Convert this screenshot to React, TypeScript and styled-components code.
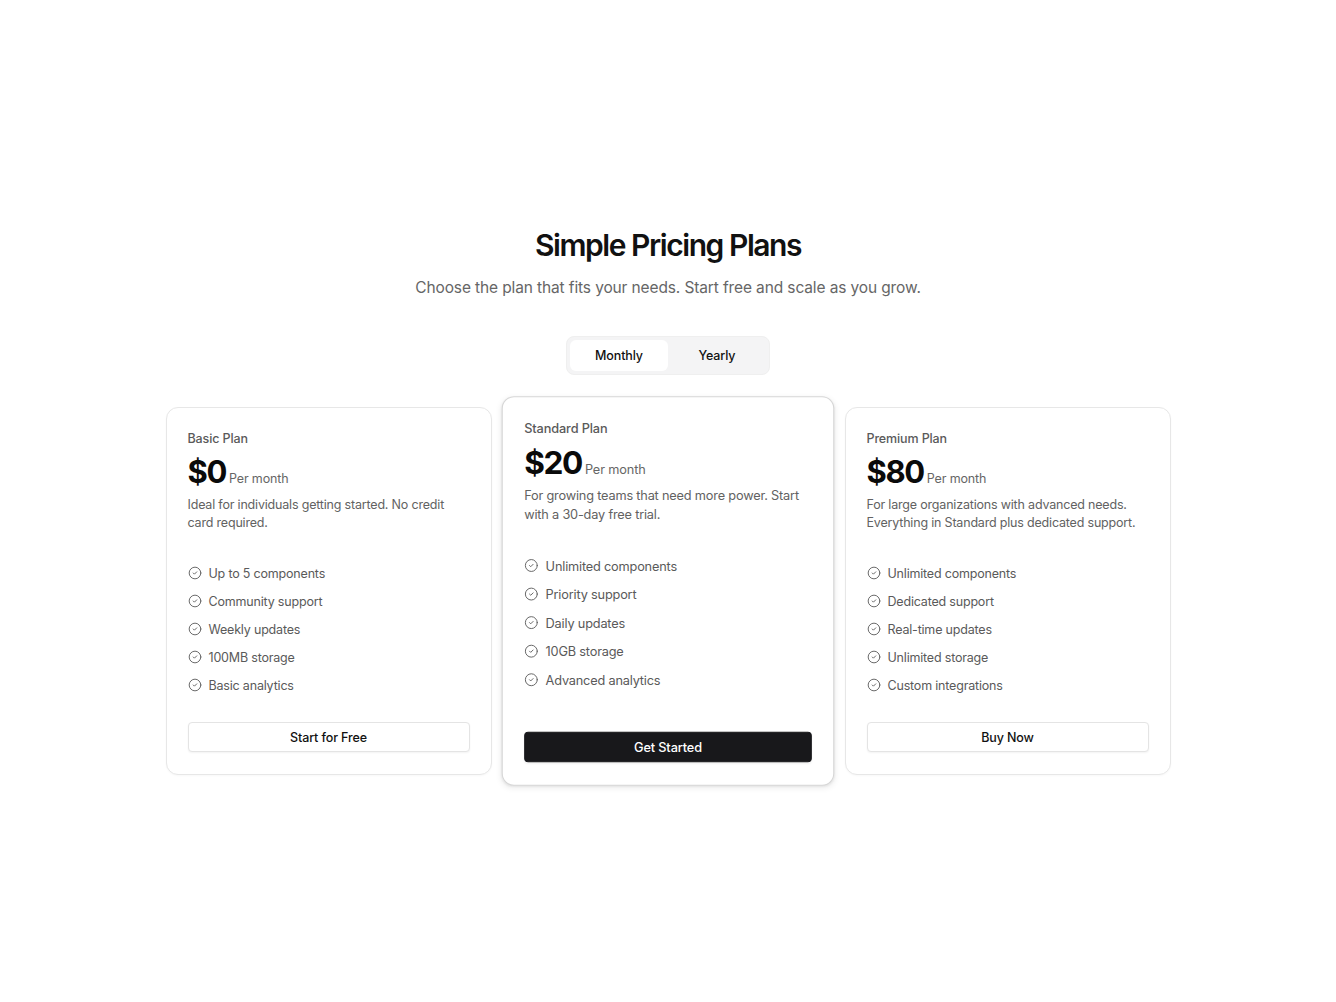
import styled, { createGlobalStyle } from "styled-components";
import { CircleCheck } from "lucide-react";
import { useState } from "react";

const GlobalStyle = createGlobalStyle`
  * { box-sizing: border-box; }
  body {
    margin: 0;
    background: #ffffff;
    font-family: Inter, "Noto Sans", Arial, sans-serif;
    color: #111111;
  }
`;

const Page = styled.main`
  min-height: 1002px;
  display: flex;
  flex-direction: column;
  align-items: center;
  padding-top: 226px;
`;

const Title = styled.h1`
  margin: 0;
  font-size: 30px;
  line-height: 38px;
  font-weight: 600;
  letter-spacing: -0.048em;
  color: #111111;
`;

const Subtitle = styled.p`
  margin: 12px 0 0;
  font-size: 15.5px;
  line-height: 24px;
  letter-spacing: -0.008em;
  color: #666666;
`;

const Toggle = styled.div`
  margin-top: 36px;
  display: flex;
  padding: 3px;
  border-radius: 8px;
  background: #f4f4f5;
  border: 1px solid #efefef;
`;

const ToggleButton = styled.button<{ $active: boolean }>`
  width: 98px;
  height: 31px;
  border: none;
  border-radius: 6px;
  font-family: inherit;
  font-size: 12.5px;
  font-weight: 500;
  letter-spacing: -0.01em;
  color: #111111;
  cursor: pointer;
  background: ${(p) => (p.$active ? "#ffffff" : "transparent")};
`;

const Cards = styled.div`
  margin-top: 25px;
  display: flex;
  align-items: center;
  gap: 13.5px;
`;

const Card = styled.section<{ $featured?: boolean }>`
  width: 326px;
  display: flex;
  flex-direction: column;
  padding: 21px 21px 22px;
  border-radius: 12px;
  background: #ffffff;
  border: 1px solid ${(p) => (p.$featured ? "#d6d6d6" : "#e7e7e7")};
  box-shadow: ${(p) =>
    p.$featured
      ? "0 2px 6px rgba(0,0,0,0.08), 0 1px 2px rgba(0,0,0,0.05)"
      : "0 1px 2px rgba(0,0,0,0.03)"};
  transform: ${(p) => (p.$featured ? "scale(1.02)" : "none")};
`;

const PlanName = styled.div`
  font-size: 12.5px;
  line-height: 20px;
  font-weight: 500;
  letter-spacing: -0.01em;
  color: #5a5a5a;
`;

const PriceRow = styled.div`
  margin-top: 5px;
  display: flex;
  align-items: baseline;
  gap: 3px;
  height: 36px;
`;

const Price = styled.span`
  font-size: 31px;
  line-height: 36px;
  font-weight: 700;
  letter-spacing: -0.045em;
  color: #0a0a0a;
`;

const Period = styled.span`
  font-size: 12.5px;
  letter-spacing: -0.01em;
  color: #666666;
`;

const Description = styled.p`
  margin: 6px 0 0;
  font-size: 12.5px;
  line-height: 17.5px;
  letter-spacing: -0.015em;
  color: #626262;
`;

const Features = styled.ul`
  list-style: none;
  margin: 32px 0 0;
  padding: 0;
  display: flex;
  flex-direction: column;
  gap: 8px;
`;

const Feature = styled.li`
  display: flex;
  align-items: center;
  gap: 7px;
  height: 20px;
  font-size: 12.5px;
  letter-spacing: -0.015em;
  color: #5a5a5a;

  svg {
    flex-shrink: 0;
    color: #606060;
  }
`;

const ActionButton = styled.button<{ $primary?: boolean; $space: number }>`
  margin-top: ${(p) => p.$space}px;
  height: 30px;
  width: 100%;
  border-radius: 4px;
  font-family: inherit;
  font-size: 12.5px;
  font-weight: 500;
  letter-spacing: -0.01em;
  cursor: pointer;
  color: ${(p) => (p.$primary ? "#ffffff" : "#111111")};
  background: ${(p) => (p.$primary ? "#18181b" : "#ffffff")};
  border: 1px solid ${(p) => (p.$primary ? "#18181b" : "#e4e4e4")};
  box-shadow: 0 1px 2px rgba(0, 0, 0, 0.05);
`;

type Plan = {
  name: string;
  price: string;
  description: string;
  features: string[];
  cta: string;
  featured?: boolean;
};

const plans: Plan[] = [
  {
    name: "Basic Plan",
    price: "$0",
    description: "Ideal for individuals getting started. No credit card required.",
    features: [
      "Up to 5 components",
      "Community support",
      "Weekly updates",
      "100MB storage",
      "Basic analytics",
    ],
    cta: "Start for Free",
  },
  {
    name: "Standard Plan",
    price: "$20",
    description: "For growing teams that need more power. Start with a 30-day free trial.",
    features: [
      "Unlimited components",
      "Priority support",
      "Daily updates",
      "10GB storage",
      "Advanced analytics",
    ],
    cta: "Get Started",
    featured: true,
  },
  {
    name: "Premium Plan",
    price: "$80",
    description:
      "For large organizations with advanced needs. Everything in Standard plus dedicated support.",
    features: [
      "Unlimited components",
      "Dedicated support",
      "Real-time updates",
      "Unlimited storage",
      "Custom integrations",
    ],
    cta: "Buy Now",
  },
];

export default function App() {
  const [billing, setBilling] = useState<"monthly" | "yearly">("monthly");

  return (
    <>
      <GlobalStyle />
      <Page>
        <Title>Simple Pricing Plans</Title>
        <Subtitle>Choose the plan that fits your needs. Start free and scale as you grow.</Subtitle>
        <Toggle>
          <ToggleButton $active={billing === "monthly"} onClick={() => setBilling("monthly")}>
            Monthly
          </ToggleButton>
          <ToggleButton $active={billing === "yearly"} onClick={() => setBilling("yearly")}>
            Yearly
          </ToggleButton>
        </Toggle>
        <Cards>
          {plans.map((plan) => (
            <Card key={plan.name} $featured={plan.featured}>
              <PlanName>{plan.name}</PlanName>
              <PriceRow>
                <Price>{plan.price}</Price>
                <Period>Per month</Period>
              </PriceRow>
              <Description>{plan.description}</Description>
              <Features>
                {plan.features.map((f) => (
                  <Feature key={f}>
                    <CircleCheck size={14} strokeWidth={1.6} />
                    {f}
                  </Feature>
                ))}
              </Features>
              <ActionButton $primary={plan.featured} $space={plan.featured ? 41 : 27}>
                {plan.cta}
              </ActionButton>
            </Card>
          ))}
        </Cards>
      </Page>
    </>
  );
}
